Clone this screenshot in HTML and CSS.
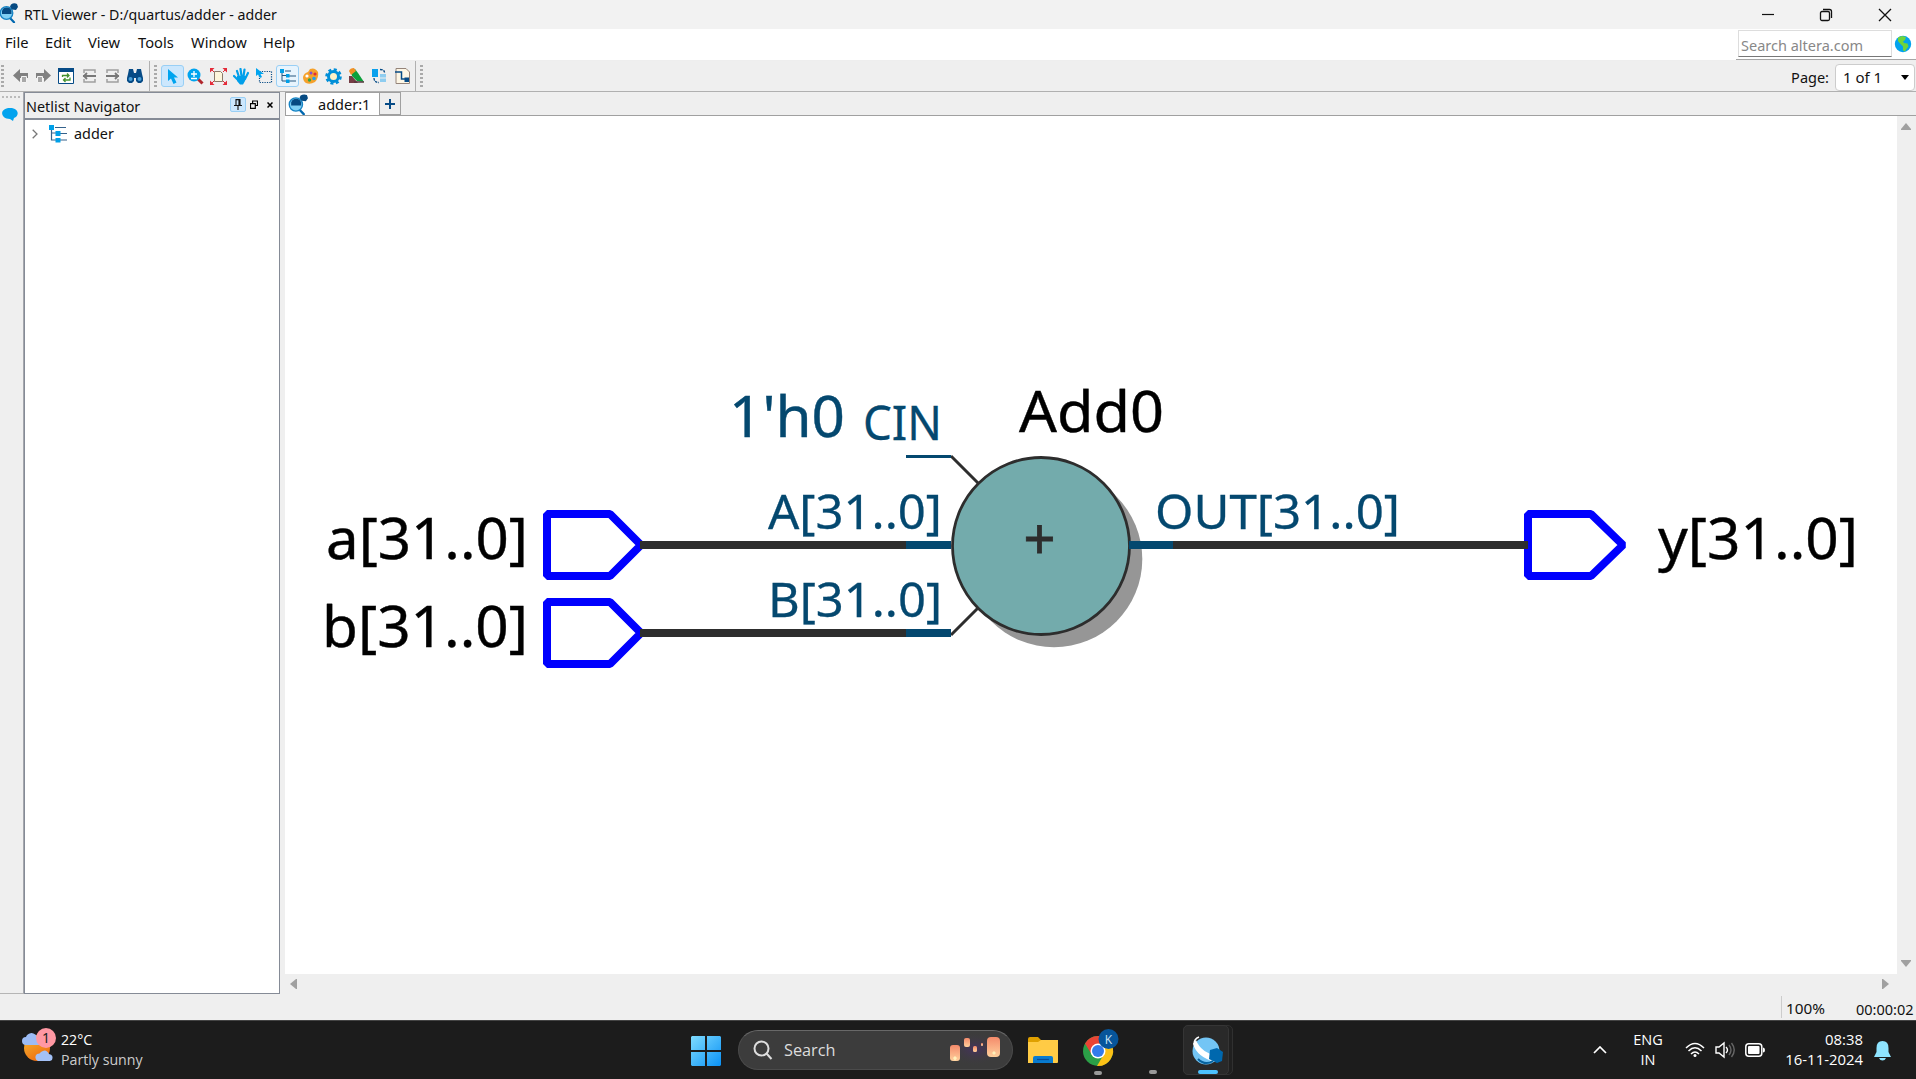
FILE: index.html
```html
<!DOCTYPE html>
<html lang="en">
<head>
<meta charset="utf-8">
<title>RTL Viewer - D:/quartus/adder - adder</title>
<link rel="stylesheet" href="styles.css">
</head>
<body>
<svg class="defs" width="0" height="0" aria-hidden="true">
  <defs>
    <symbol id="rtl" viewBox="0 0 20 20">
      <path d="M7 9L15 3" stroke="#0a4a80" stroke-width="1.5"/>
      <path d="M11 15l4 4.2" stroke="#0068b0" stroke-width="2.2" stroke-linecap="round"/>
      <circle cx="7.5" cy="10" r="6.3" fill="#7fd0f5" stroke="#1583c4" stroke-width="1.3"/>
      <path d="M3 11V8a5 5 0 0 1 9.500 0v3z" fill="#064a82"/>
      <path d="M12 1.500q3-2 6-.5l1 3-2 3-4-.5-2-3z" fill="#064a82"/>
    </symbol>
    <symbol id="tree" viewBox="0 0 18 18">
      <path d="M2.500 2v13H8M3 8h5M6 2.500h11M9 8.500h9M9 15h9" fill="none" stroke="#34628c" stroke-width="1.200"/>
      <path d="M0 0h5v5H0zM6.500 6h5v5h-5zM6.500 13h5v4.500h-5z" fill="#00a0e8"/>
    </symbol>
  </defs>
</svg>
<div class="window">
  <header class="titlebar">
    <svg class="app-icon" width="20" height="20"><use href="#rtl"/></svg>
    <span class="title">RTL Viewer - D:/quartus/adder - adder</span>
    <div class="controls">
      <svg width="14" height="14" viewBox="0 0 14 14"><path d="M2 6.500h12" stroke="#111" stroke-width="1.200"/></svg>
      <svg width="14" height="14" viewBox="0 0 14 14" fill="none" stroke="#111" stroke-width="1.300"><rect x="1.500" y="3.500" width="9" height="9" rx="1.500"/><path d="M4 1.500h6.500q2 0 2 2V10"/></svg>
      <svg width="14" height="14" viewBox="0 0 14 14"><path d="M1 1l12 12M13 1L1 13" stroke="#111" stroke-width="1.300"/></svg>
    </div>
  </header>
  <nav class="menubar">
    <div class="menus"><span>File</span><span>Edit</span><span>View</span><span>Tools</span><span>Window</span><span>Help</span></div>
    <div class="search-area">
      <div class="search-box">Search altera.com</div>
      <svg width="18" height="18" viewBox="0 0 18 18"><circle cx="9" cy="9" r="8.200" fill="#03a3ee"/><path d="M4 2.500l4-1.500 4 1-1 3-2 1.500 1 1.500 3.500.5 1 3-2.500 3-1 2-2-1v-4L6.500 9 4 6z" fill="#6fd43a"/></svg>
    </div>
  </nav>
  <div class="toolbar">
    <i class="grip"></i>
    <div class="tools nav-tools">
      <svg width="16" height="16" viewBox="0 0 16 16"><path d="M0 7.500L7 1v4h8v5H7v4z" fill="#808080"/><path d="M8.500 8.500h5v6h-5z" fill="#a8a8a8" stroke="#f4f4f4"/></svg>
      <svg width="16" height="16" viewBox="0 0 16 16"><path d="M16 7.500L9 1v4H1v5h8v4z" fill="#808080"/><path d="M2.500 8.500h5v6h-5z" fill="#a8a8a8" stroke="#f4f4f4"/></svg>
      <svg width="16" height="16" viewBox="0 0 16 16"><path d="M.5.5h15v15H.5z" fill="#fff" stroke="#064b86"/><path d="M0 0h16v4H0z" fill="#064b86"/><path d="M4.500 9V7.500h6M9 5.500l2 2-2 2M12 9.500V12H6M7.500 10l-2 2 2 2" fill="none" stroke="#45922f" stroke-width="1.300"/></svg>
      <svg width="15" height="15" viewBox="0 0 15 15"><path d="M2 4V1h11v3M2 10v3h11v-3" fill="none" stroke="#a0a0a0" stroke-width="1.500"/><path d="M1 7h13M5 4L2 7l3 3" fill="none" stroke="#777" stroke-width="1.800"/></svg>
      <svg width="15" height="15" viewBox="0 0 15 15"><path d="M2 4V1h11v3M2 10v3h11v-3" fill="none" stroke="#a0a0a0" stroke-width="1.500"/><path d="M1 7h13M10 4l3 3-3 3" fill="none" stroke="#777" stroke-width="1.800"/></svg>
      <svg width="18" height="16" viewBox="0 0 18 16"><path d="M2 6l1-5h4l1 4h2l1-4h4l1 5 1 4v3l-2 2h-3l-2-2v-3H8v3l-2 2H3l-2-2v-3z" fill="#064b86"/><circle cx="4.500" cy="11" r="2" fill="#4aa0d8"/><circle cx="13.500" cy="11" r="2" fill="#4aa0d8"/></svg>
    </div>
    <i class="divider"></i>
    <i class="grip"></i>
    <div class="tools edit-tools">
      <span class="on"><svg width="11" height="15" viewBox="0 0 11 15"><path d="M1 0v12l3-2.500L6.500 15l3-1.500L7 8.500h4z" fill="#00a4ef"/></svg></span>
      <svg width="17" height="17" viewBox="0 0 17 17"><path d="M11 11l4.500 4.500" stroke="#b1272d" stroke-width="3"/><circle cx="7" cy="7" r="6.500" fill="#00a4ef"/><path d="M4 6h6M7 3v6M4 10.500h6" stroke="#fff" stroke-width="1.300"/></svg>
      <svg width="17" height="17" viewBox="0 0 17 17"><path d="M4.500 3.500h6l2 2v8h-8z" fill="#fdf6dc" stroke="#8a7a6a"/><path d="M0 0h4.500L0 4.500zM17 0h-4.500L17 4.500zM0 17v-4.500L4.500 17zM17 17v-4.500L12.500 17z" fill="#e42a38"/><path d="M1 1l3 3M16 1l-3 3M1 16l3-3M16 16l-3-3" stroke="#e42a38"/></svg>
      <svg width="17" height="17" viewBox="0 0 17 17"><path d="M4 3l2 6M7.500 1l1 7M11.500 1.500l-1 7M15 5l-3 6M1 8l4 4" stroke="#009fea" stroke-width="2.200" stroke-linecap="round"/><path d="M4 8h9l-1 5-2 3.500H7L4 13z" fill="#009fea"/></svg>
      <svg width="17" height="16" viewBox="0 0 17 16"><path d="M3.500 3.500h12v11h-12z" fill="none" stroke="#064b86" stroke-width="1.200" stroke-dasharray="1.200 1.200"/><path d="M0 0v8l2-1.500L4 10l2-1-1.500-3H8z" fill="#00a4ef"/></svg>
      <span class="on"><svg width="16" height="14" viewBox="0 0 16 14"><path d="M2 1v11h4M2 6.500h4M5 2h6M9 7h7M9 12h7" stroke="#27567f" fill="none"/><path d="M0 0h4v4H0zM6 5h3.500v3.500H6zM6 10.500h3.500V14H6z" fill="#00a0e8"/></svg></span>
      <svg width="16" height="16" viewBox="0 0 16 16"><path d="M0 9Q1 5 5 4L7 1q5-2 8 3 1 6-3 10-5 3-9 1-3-2-3-6z" fill="#f6a12a"/><circle cx="4" cy="8" r="1.600" fill="#fff"/><circle cx="8" cy="5" r="1.500" fill="#8550d0"/><circle cx="12" cy="6" r="1.600" fill="#e22f35"/><circle cx="11" cy="10.500" r="1.800" fill="#22a0ee"/><circle cx="6.500" cy="12" r="1.700" fill="#38a444"/></svg>
      <svg width="17" height="17" viewBox="0 0 17 17"><circle cx="8.500" cy="8.500" r="7" fill="none" stroke="#008fd8" stroke-width="2.600" stroke-dasharray="3 2.500"/><circle cx="8.500" cy="8.500" r="5" fill="#fff2c7" stroke="#008fd8" stroke-width="3"/></svg>
      <svg width="17" height="16" viewBox="0 0 17 16"><path d="M1 8h3l6 7H1z" fill="#753d45"/><path d="M3 3l4-2 3 4 6 9-7-1-5-5z" fill="#0ba03b"/><path d="M1 3q1-3 5-3l2 3-5 4z" fill="#f19025"/><path d="M6 14h10" stroke="#57383f" stroke-width="1.500"/></svg>
      <svg width="15" height="16" viewBox="0 0 15 16"><path d="M0 1h6v8H0z" fill="#0aa0ec"/><path d="M8 6h6v8H8z" fill="#8ecdf0"/><path d="M8 1.500q5 0 4.500 4M2 10q0 4.500 5 4.500" fill="none" stroke="#064b86" stroke-width="1.300" stroke-dasharray="2.500 1"/><path d="M7 10h8" stroke="#efefef"/></svg>
      <svg width="15" height="16" viewBox="0 0 15 16"><path d="M1 .5h10l3.500 3.500v11.500H1z" fill="#fdf6e5" stroke="#95847a"/><path d="M0 4h6.500v7H10" fill="none" stroke="#064b86" stroke-width="1.500"/><path d="M9.500 9.500H14V14H9.500z" fill="#064b86"/></svg>
    </div>
    <i class="divider"></i>
    <i class="grip"></i>
    <div class="page-pick"><label>Page:</label><div class="select"><span>1 of 1</span><svg width="8" height="5"><path d="M0 0h8L4 5z"/></svg></div></div>
  </div>
  <main class="work">
    <aside class="dock"><i class="grip-h"></i>
      <svg width="16" height="14" viewBox="0 0 16 14"><path d="M8 0c10 0 9 9 4 10l-1 3-3-2C-2 11-3 0 8 0z" fill="#03a3ee"/></svg>
    </aside>
    <section class="navigator">
      <div class="nav-head"><span class="nav-title">Netlist Navigator</span>
        <span class="pin"><svg width="8" height="11" viewBox="0 0 8 11"><path d="M2 .6h4v5.900H2zM5 1v5M0 6.500h8M4 7v4" fill="none" stroke="#111" stroke-width="1.100"/></svg></span>
        <svg class="float" width="8" height="9" viewBox="0 0 8 9"><path d="M2.600 3V1h4.900v4.500H5.500M.5 3.700h4.800v4.700H.5z" fill="none" stroke="#000" stroke-width="1.200"/></svg>
        <svg class="close" width="6" height="6" viewBox="0 0 6 6"><path d="M.5.5l5 5M5.500.5l-5 5" stroke="#000" stroke-width="1.500"/></svg>
      </div>
      <div class="tree-row"><svg width="6" height="10" viewBox="0 0 6 10"><path d="M.7.7L5 5 .7 9.300" fill="none" stroke="#777" stroke-width="1.300"/></svg><svg width="18" height="18"><use href="#tree"/></svg><span>adder</span></div>
    </section>
    <section class="editor">
      <div class="tabs"><div class="tab"><svg width="21" height="21"><use href="#rtl"/></svg><span>adder:1</span></div><div class="new-tab"><svg width="10" height="10"><path d="M0 5h10M5 0v10" stroke="#064b86" stroke-width="2"/></svg></div></div>
      <div class="view">
        <svg class="schematic" viewBox="285 116 1612 858" width="1612" height="858">
          <circle cx="1054" cy="559" r="88.300" fill="#969696"/>
          <g fill="none" stroke="#2d2d2d" stroke-width="3"><path d="M951 456l27 27M951 635l27-27"/></g>
          <g fill="none" stroke="#0000fe" stroke-width="8" stroke-linejoin="bevel">
            <path d="M547 514h63l31 31-31 31h-63z"/><path d="M547 602h63l31 31-31 31h-63z"/><path d="M1528 514h63l32 31-32 31h-63z"/>
          </g>
          <g stroke="#2d2d2d" stroke-width="8"><path d="M640 545h266M640 633h266M1173 545h355"/></g>
          <circle cx="1041" cy="546" r="88.500" fill="#73abac" stroke="#2d2d2d" stroke-width="2.800"/>
          <g stroke="#04486f" stroke-width="8"><path d="M906 545h45M906 633h45M1129 545h44"/><path d="M906 456.500h45" stroke-width="3"/></g>
          <g class="big">
            <text x="1019" y="432" textLength="145" lengthAdjust="spacingAndGlyphs">Add0</text>
            <text x="326" y="559" textLength="202" lengthAdjust="spacingAndGlyphs">a[31..0]</text>
            <text x="322" y="647" textLength="206" lengthAdjust="spacingAndGlyphs">b[31..0]</text>
            <text x="1658" y="559" textLength="200" lengthAdjust="spacingAndGlyphs">y[31..0]</text>
            <text class="blue" x="729" y="437" textLength="116" lengthAdjust="spacingAndGlyphs">1'h0</text>
          </g>
          <g class="small">
            <text x="863" y="440" textLength="79" lengthAdjust="spacingAndGlyphs">CIN</text>
            <text x="768" y="529" textLength="174" lengthAdjust="spacingAndGlyphs">A[31..0]</text>
            <text x="768" y="617" textLength="174" lengthAdjust="spacingAndGlyphs">B[31..0]</text>
            <text x="1155" y="529" textLength="245" lengthAdjust="spacingAndGlyphs">OUT[31..0]</text>
          </g>
          <text class="plus" x="1039.500" y="559" text-anchor="middle">+</text>
        </svg>
        <div class="vscroll"><svg width="10" height="8"><path d="M5 0l5 6v1H0V6z"/></svg><svg width="10" height="8"><path d="M5 8l5-6V1H0v1z"/></svg></div>
      </div>
      <div class="hscroll"><svg width="8" height="10"><path d="M0 5l6-5h1v10H6z"/></svg><svg width="8" height="10"><path d="M8 5L2 0H1v10h1z"/></svg></div>
    </section>
  </main>
  <footer class="status"><span class="zoom">100%</span><span class="elapsed">00:00:02</span></footer>
</div>
<div class="taskbar">
  <div class="weather">
    <div class="weather-icon">
      <svg width="34" height="34" viewBox="0 0 34 34"><defs><linearGradient id="sun" x1="0" y1="0" x2=".6" y2="1"><stop stop-color="#f3ba35"/><stop offset="1" stop-color="#ef6d10"/></linearGradient></defs><circle cx="15" cy="20" r="13" fill="url(#sun)"/><path d="M4 17a4 4 0 0 1 0-8 6 6 0 0 1 10-2l5 10z" fill="#9cbcf5"/><path d="M16 33a4 4 0 0 1-1-7q3 0 4-2 5-4 8 2 5 1 3 6l-2 1z" fill="#a3c1f7"/></svg>
      <span class="badge">1</span>
    </div>
    <div class="weather-text"><span>22°C</span><span class="dim">Partly sunny</span></div>
  </div>
  <div class="apps">
    <svg class="start" width="30" height="30" viewBox="0 0 30 30"><defs><linearGradient id="win" x1="0" y1="0" x2="1" y2="1"><stop stop-color="#7fdcff"/><stop offset="1" stop-color="#0a91f5"/></linearGradient></defs><path d="M1 0h13v14H0V1zM16 0h13l1 1v13H16zM0 16h14v14H1l-1-1zM16 16h14v13l-1 1H16z" fill="url(#win)"/></svg>
    <div class="task-search">
      <svg width="20" height="20" viewBox="0 0 20 20" fill="none" stroke="#ddd" stroke-width="2"><circle cx="8.500" cy="8.500" r="7"/><path d="M13.500 13.500L18.500 19"/></svg><span>Search</span>
      <svg class="lanterns" width="54" height="36" viewBox="0 0 54 36"><defs><linearGradient id="lamp" x1="0" y1="0" x2="0" y2="1"><stop stop-color="#f48a6b"/><stop offset="1" stop-color="#ffd09c"/></linearGradient><radialGradient id="glow"><stop stop-color="#45315f"/><stop offset="1" stop-color="#3c3c3c" stop-opacity="0"/></radialGradient></defs><ellipse cx="27" cy="17" rx="27" ry="17" fill="url(#glow)"/><g fill="url(#lamp)"><rect x="2" y="13" width="10" height="16" rx="3"/><rect x="16" y="6" width="6" height="9" rx="2"/><rect x="25" y="14" width="4" height="6" rx="1.500"/><rect x="33" y="11" width="2" height="3" rx="1"/><rect x="39" y="5" width="13" height="20" rx="4"/></g><path d="M5 26l2-2 2 2-2 3zM44 21l2-2 2 2-2 2z" fill="#fff0ba"/></svg>
    </div>
    <svg class="folder" width="30" height="28" viewBox="0 0 30 28"><path d="M0 2q0-2 2-2h8l3 3h15v8H0z" fill="#dfa000"/><path d="M0 5h10l3-2h17v22q0 1-1 1H0z" fill="#ffcb45"/><path d="M5 26v-5q0-2 2-2h16q2 0 2 2v5z" fill="#087bd0"/><path d="M9 22.500h12" stroke="#064c98" stroke-width="1.200"/></svg>
    <svg class="chrome" width="38" height="50" viewBox="0 0 38 50"><g transform="translate(2 8)"><circle cx="15" cy="18" r="15" fill="#2b9f47"/><path d="M2 10.500A15 15 0 0 1 28 10.500L15 18 9 22z" fill="#e94435"/><path d="M15 11h13.300A15 15 0 0 1 14 33l7-12z" fill="#fbc116"/><circle cx="15" cy="18" r="7.500" fill="#fff"/><circle cx="15" cy="18" r="6" fill="#327bea"/></g><circle cx="27.500" cy="14" r="10" fill="#07559a"/><text class="k" x="27.500" y="18.500" text-anchor="middle">K</text><rect x="13" y="46" width="8" height="4" rx="2" fill="#999"/></svg>
    <i class="dot"></i>
    <div class="stack"><div class="active-app"><svg width="32" height="30" viewBox="0 0 32 30"><circle cx="14" cy="15" r="13.500" fill="#73c5f5"/><path d="M4 4q5 13 22 16l-3 6Q5 21 1 8z" fill="#fff"/><path d="M7 1q-5 2-5 7" fill="none" stroke="#fff" stroke-width="1.500"/><path d="M6 23q7 7 15 2" fill="none" stroke="#07639e" stroke-width="2"/><path d="M18 14l7-2 6 4-1 9-5 2-8-4z" fill="#0068ae"/></svg><i></i></div></div>
  </div>
  <div class="tray">
    <svg class="chev" width="14" height="8"><path d="M1 7l6-6 6 6" fill="none" stroke="#fff" stroke-width="1.700"/></svg>
    <div class="lang"><span>ENG</span><span>IN</span></div>
    <svg class="wifi" width="20" height="16" viewBox="0 0 20 16" fill="none" stroke="#fff" stroke-width="1.500"><path d="M1 6q9-9 18 0M3.500 9q6.500-6.500 13 0M6 12q4-4 8 0"/><circle cx="10" cy="13.500" r="1.500" fill="#fff" stroke="none"/></svg>
    <svg class="vol" width="20" height="18" viewBox="0 0 20 18" fill="none" stroke="#fff" stroke-width="1.400"><path d="M1 6h3l5-4v14l-5-4H1zM11 6q3 3 0 6"/><path d="M14 4q4 5 0 10M16.500 2q5.500 7 0 14" stroke="#666"/></svg>
    <svg class="batt" width="20" height="14" viewBox="0 0 20 14"><rect x=".8" y=".8" width="16" height="12.400" rx="3" fill="none" stroke="#fff" stroke-width="1.500"/><rect x="3" y="3" width="11.500" height="8" rx="1" fill="#fff"/><path d="M18 4.500q2 0 2 2.500t-2 2.500z" fill="#fff"/></svg>
    <div class="clock"><span>08:38</span><span>16-11-2024</span></div>
    <svg class="bell" width="17" height="20" viewBox="0 0 17 20"><path d="M8.500 0q6 0 6 7v4l2.500 5H0l2.500-5V7q0-7 6-7zM5 17h7q-1 2.500-3.500 2.500T5 17z" fill="#8ee4ff"/></svg>
  </div>
</div>
</body>
</html>
```
FILE: styles.css
```css
* { box-sizing: border-box; }
body { margin: 0; width: 1916px; height: 1079px; overflow: hidden; display: flex; flex-direction: column; background: #efefef; font-family: "Noto Sans", sans-serif; font-size: 15px; line-height: 20px; color: #111; }
svg { display: block; flex: none; }
.defs { position: absolute; }
.window { height: 1020px; display: flex; flex-direction: column; }
.titlebar { height: 29px; background: #f2f2f2; display: flex; align-items: center; }
.app-icon { margin: -3px 5px 0 -1px; }
.title { font-size: 14.200px; letter-spacing: .03px; white-space: nowrap; }
.controls { margin: 0 24px 0 auto; display: flex; gap: 45px; }
.menubar { height: 32px; background: #fff; border-bottom: 1px solid #eee; display: flex; justify-content: space-between; }
.menus { display: grid; grid-template-columns: 40px 43px 50px 53px 72px 60px; padding: 3px 0 0 5px; font-size: 14.700px; }
.search-area { width: 180px; display: flex; align-items: center; gap: 2px; padding: 0 0 1px 2px; border-bottom: 1px solid #a6a6a6; }
.search-box { width: 154px; height: 27px; border: 1px solid #ddd; border-bottom: 1px solid #777; background: #fff; color: #888; padding: 4px 0 0 2px; font-size: 14.500px; }
.toolbar { height: 31px; border-bottom: 1px solid #b0b0b0; display: flex; align-items: center; }
.grip { width: 3px; height: 22px; margin-left: 1px; background: repeating-linear-gradient(#aaa 0 2px, transparent 2px 4px); }
.tools { display: grid; justify-items: center; align-items: center; height: 100%; }
.nav-tools { grid-template-columns: 21px 23px 24px 23px 22px 24px; margin: 0 1px 0 6px; }
.edit-tools { grid-template-columns: repeat(11, 23px); margin-left: 4px; }
.on { width: 23px; height: 22px; border: 1px solid #99cff5; border-radius: 3px; background: #cce7fd; display: grid; place-items: center; }
.edit-tools .on:nth-child(6) { background: #e8f4fd; }
.divider { width: 1px; height: 100%; background: #b0b0b0; margin: 0 3px 0 1px; }
.page-pick { margin: 2px 1px 0 auto; display: flex; align-items: center; gap: 6px; font-size: 14.500px; }
.select { width: 80px; height: 27px; border: 1px solid #ccc; border-radius: 4px; background: #fff; display: flex; align-items: center; justify-content: space-between; padding: 0 5px 0 7px; font-size: 15px; }
.work { height: 902px; display: flex; }
.dock { width: 24px; height: 902px; border-right: 1px solid #a5a7ad; border-bottom: 1px solid #b5b5b5; padding: 4px 2px; }
.grip-h { display: block; height: 2px; width: 20px; background: repeating-linear-gradient(90deg, #bbb 0 2px, transparent 2px 4px); margin-bottom: 10px; }
.navigator { width: 256px; height: 902px; border: 1px solid #858b96; background: #fff; }
.nav-head { height: 27px; background: #efefef; border-bottom: 2px solid #858b96; display: flex; align-items: center; padding: 2px 6px 0 1px; }
.nav-title { flex: 1; font-size: 14.400px; }
.pin { width: 16px; height: 15px; margin: -4px 4px 0 0; background: #cce7fd; border: 1px solid #99cff5; border-radius: 2px; display: grid; place-items: center; }
.float { margin: -4px 9px 0 0; }
.close { margin-top: -4px; }
.tree-row { height: 27px; display: flex; align-items: center; padding-left: 7px; font-size: 14.400px; }
.tree-row svg + svg { margin: 0 7px 0 11px; }
.editor { width: 1631px; margin-left: 5px; }
.tabs { height: 24px; display: flex; border-bottom: 1px solid #a0a0a0; }
.tab { width: 95px; height: 23px; background: #fff; border: 1px solid #a0a0a0; border-bottom: 0; display: flex; align-items: center; gap: 9px; padding-left: 2px; font-size: 14.500px; }
.new-tab { width: 21px; border: 1px solid #a0a0a0; border-left: 0; background: #eee; display: grid; place-items: center; }
.view { display: flex; height: 858px; }
.schematic { background: #fff; }
.schematic text { font-family: "Noto Sans", sans-serif; }
.big { font-size: 56.500px; fill: #000; stroke: #000; stroke-width: .4; }
.big .blue, .small { fill: #04486f; stroke: #04486f; }
.small { font-size: 47.500px; stroke-width: .3; }
.schematic .plus { font-size: 56px; fill: #2d2d2d; stroke: #2d2d2d; stroke-width: .8; }
.vscroll { width: 19px; padding: 7px 0 7px 4px; display: flex; flex-direction: column; justify-content: space-between; fill: #a0a0a0; }
.hscroll { height: 20px; display: flex; justify-content: space-between; align-items: center; padding: 0 27px 1px 5px; fill: #a0a0a0; }
.status { height: 26px; display: flex; justify-content: flex-end; align-items: center; font-size: 15px; }
.zoom { border-left: 1px solid #ccc; padding-left: 4px; width: 75px; height: 22px; line-height: 25px; font-size: 15.300px; }
.elapsed { width: 60px; padding-top: 3px; font-size: 14.500px; }
.taskbar { height: 59px; background: #1c1c1c; border-top: 1px solid #444; display: flex; color: #fff; font-family: "Open Sans", "Noto Sans", sans-serif; font-size: 14px; }
.weather { width: 691px; display: flex; padding: 7px 0 0 22px; gap: 5px; }
.weather-icon { position: relative; width: 34px; height: 34px; }
.badge { position: absolute; left: 14px; top: 0; width: 20px; height: 20px; border-radius: 50%; background: #ff98a3; color: #222; text-align: center; line-height: 20px; font-family: "Noto Sans", sans-serif; }
.weather-text { display: flex; flex-direction: column; padding-top: 2px; font-size: 14.200px; }
.dim { color: #ccc; }
.apps { width: 890px; display: flex; align-items: flex-start; }
.start { margin-top: 15px; }
.task-search { width: 275px; height: 40px; margin: 9px 15px 0 17px; border: 1px solid #4b4b4b; border-top-color: #686868; border-radius: 20px; background: #3c3c3c; display: flex; align-items: center; padding: 0 10px 0 14px; font-size: 16.300px; color: #ddd; }
.task-search span { margin-left: 11px; }
.lanterns { margin-left: auto; }
.folder { margin-top: 16px; }
.chrome { margin: 4px 0 0 23px; }
.k { font: 12px "Open Sans", sans-serif; fill: #cde4f5; }
.dot { width: 8px; height: 4px; border-radius: 2px; background: #999; margin: 49px 0 0 30px; }
.stack { width: 50px; height: 50px; margin: 4px 0 0 26px; border: 1px solid #303030; border-radius: 5px; background: #202020; }
.active-app { width: 46px; height: 50px; margin: -1px; border: 1px solid #353535; border-radius: 5px; background: #292929; display: flex; flex-direction: column; align-items: center; padding: 10px 0 0 3px; }
.active-app i { width: 20px; height: 4px; border-radius: 2px; background: #4cc2ff; margin-top: 4px; }
.tray { flex: 1; display: flex; align-items: flex-start; padding-left: 12px; }
.chev { margin-top: 25px; }
.lang { width: 52px; margin: 9px 0 0 15px; display: flex; flex-direction: column; text-align: center; font-size: 14.500px; }
.wifi { margin: 21px 10px 0 11px; }
.vol { margin: 20px 10px 0 0; }
.batt { margin-top: 22px; }
.clock { width: 90px; margin: 8px 11px 0 8px; display: flex; flex-direction: column; text-align: right; font-size: 14.900px; }
.bell { margin-top: 20px; }
```
